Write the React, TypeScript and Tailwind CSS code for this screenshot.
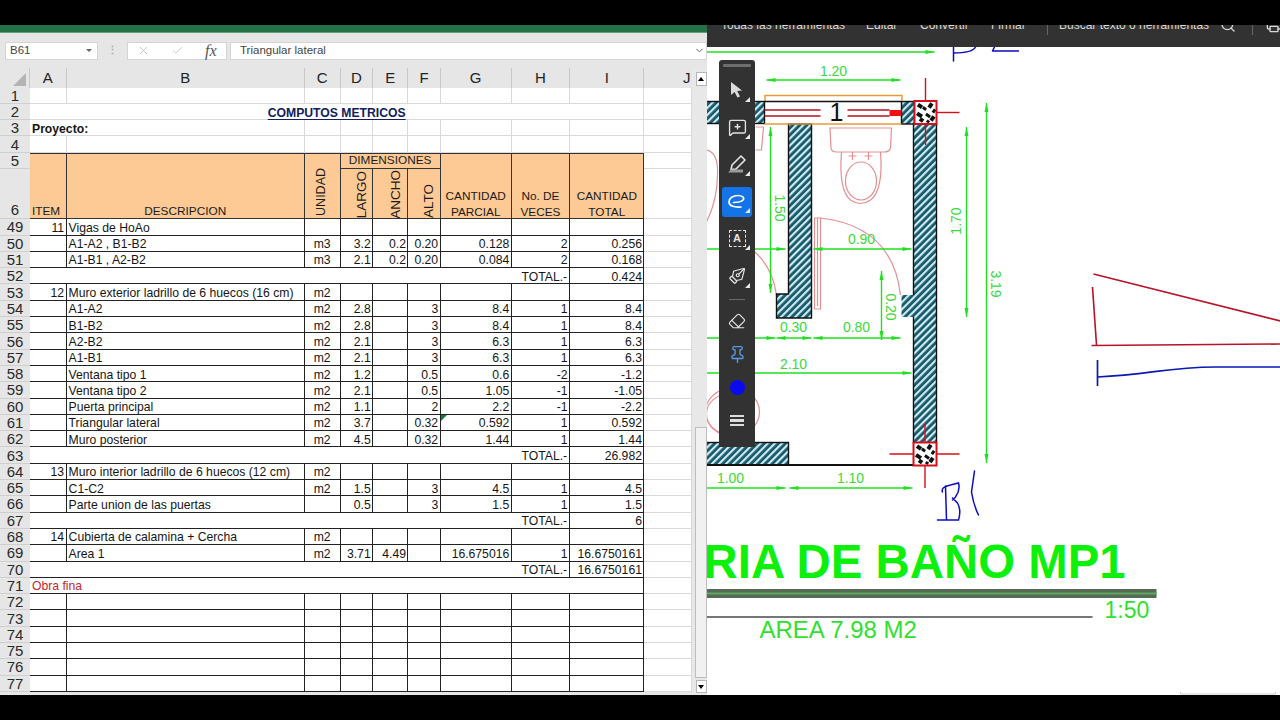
import React from 'react';
import { ChevronDown, Eraser, MessageSquarePlus, PenTool, Pin, Search, X, Check, Printer } from 'lucide-react';

type Row = { n: number; a?: string; b?: string; c?: string; d?: string; e?: string; f?: string; g?: string; h?: string; i?: string; total?: string; fina?: string };

const rows: Row[] = [
  { n: 49, a: '11', b: 'Vigas de HoAo' },
  { n: 50, b: 'A1-A2 , B1-B2', c: 'm3', d: '3.2', e: '0.2', f: '0.20', g: '0.128', h: '2', i: '0.256' },
  { n: 51, b: 'A1-B1 , A2-B2', c: 'm3', d: '2.1', e: '0.2', f: '0.20', g: '0.084', h: '2', i: '0.168' },
  { n: 52, total: '0.424' },
  { n: 53, a: '12', b: 'Muro exterior ladrillo de 6 huecos (16 cm)', c: 'm2' },
  { n: 54, b: 'A1-A2', c: 'm2', d: '2.8', f: '3', g: '8.4', h: '1', i: '8.4' },
  { n: 55, b: 'B1-B2', c: 'm2', d: '2.8', f: '3', g: '8.4', h: '1', i: '8.4' },
  { n: 56, b: 'A2-B2', c: 'm2', d: '2.1', f: '3', g: '6.3', h: '1', i: '6.3' },
  { n: 57, b: 'A1-B1', c: 'm2', d: '2.1', f: '3', g: '6.3', h: '1', i: '6.3' },
  { n: 58, b: 'Ventana tipo 1', c: 'm2', d: '1.2', f: '0.5', g: '0.6', h: '-2', i: '-1.2' },
  { n: 59, b: 'Ventana tipo 2', c: 'm2', d: '2.1', f: '0.5', g: '1.05', h: '-1', i: '-1.05' },
  { n: 60, b: 'Puerta principal', c: 'm2', d: '1.1', f: '2', g: '2.2', h: '-1', i: '-2.2' },
  { n: 61, b: 'Triangular lateral', c: 'm2', d: '3.7', f: '0.32', g: '0.592', h: '1', i: '0.592' },
  { n: 62, b: 'Muro posterior', c: 'm2', d: '4.5', f: '0.32', g: '1.44', h: '1', i: '1.44' },
  { n: 63, total: '26.982' },
  { n: 64, a: '13', b: 'Muro interior ladrillo de 6 huecos (12 cm)', c: 'm2' },
  { n: 65, b: 'C1-C2', c: 'm2', d: '1.5', f: '3', g: '4.5', h: '1', i: '4.5' },
  { n: 66, b: 'Parte union de las puertas', d: '0.5', f: '3', g: '1.5', h: '1', i: '1.5' },
  { n: 67, total: '6' },
  { n: 68, a: '14', b: 'Cubierta de calamina + Cercha', c: 'm2' },
  { n: 69, b: 'Area 1', c: 'm2', d: '3.71', e: '4.49', g: '16.675016', h: '1', i: '16.6750161' },
  { n: 70, total: '16.6750161' },
  { n: 71, fina: 'Obra fina' },
  { n: 72 }, { n: 73 }, { n: 74 }, { n: 75 }, { n: 76 }, { n: 77 },
];

const headCell = 'flex items-center justify-center bg-[#e6e6e6] border-r border-[#c8c8c8] text-[#222]';
const rowHead = 'flex items-center justify-center bg-[#e6e6e6] border-b border-[#cfcfcf] text-[15px] leading-none text-[#2a2a2a]';
const light = 'bg-white border-r border-b border-[#d9d9d9]';
const dark = 'bg-white border-r border-b border-[#222] flex items-center pt-[2px] whitespace-nowrap overflow-hidden';
const orange = 'bg-[#fdca96] border-r border-b border-[#333] border-t text-[11.8px] text-[#1a1a1a]';

const Num = ({ v, extra = '' }: { v?: string; extra?: string }) => (
  <div className={`${dark} justify-end pr-[1.5px] ${extra}`}>{v}</div>
);

const SheetRow = ({ r }: { r: Row }) => (
  <>
    <div className={rowHead}>{r.n}</div>
    {r.total !== undefined ? (
      <>
        <div className={`${dark} col-span-8 justify-end pr-[2px]`}>TOTAL.-</div>
        <Num v={r.total} />
      </>
    ) : r.fina ? (
      <div className={`${dark} col-span-9 pl-[2px] text-[#c4262e]`}>{r.fina}</div>
    ) : (
      <>
        <Num v={r.a} />
        <div className={`${dark} pl-[2px]`}>{r.b}</div>
        <div className={`${dark} justify-center`}>{r.c}</div>
        <Num v={r.d} />
        <Num v={r.e} />
        <Num v={r.f} />
        <div className={`${dark} justify-end pr-[1.5px] relative`}>
          {r.n === 61 && <span className="absolute left-0 top-0 w-0 h-0 border-t-[6px] border-t-[#1e7a3c] border-r-[6px] border-r-transparent" />}
          {r.g}
        </div>
        <Num v={r.h} />
        <Num v={r.i} />
      </>
    )}
    <div className={light} />
  </>
);

const Sheet = () => (
  <div className="grid w-[691.6px] text-[12.2px] leading-none text-[#151515] grid-cols-[30px_36.6px_238.2px_35.8px_32.6px_35.3px_32.2px_71.1px_58.4px_74.3px_47.1px] grid-rows-[19.6px_repeat(4,16.3px)_16px_50.5px_repeat(29,16.31px)]">
    {/* column letters */}
    <div className={`${headCell} relative`}>
      <span className="absolute right-[3px] bottom-[2px] w-0 h-0 border-b-[13px] border-b-[#b4b4b4] border-l-[13px] border-l-transparent" />
    </div>
    {['A', 'B', 'C', 'D', 'E', 'F', 'G', 'H', 'I'].map((c) => (
      <div key={c} className={`${headCell} text-[15px]`}>{c}</div>
    ))}
    <div className="flex items-center justify-end pr-[1px] bg-[#e6e6e6] text-[15px] text-[#222]">J</div>

    {/* rows 1 to 4 */}
    <div className={rowHead}>1</div>
    {Array.from({ length: 10 }).map((_, i) => <div key={i} className={light} />)}
    <div className={rowHead}>2</div>
    <div className={`${light} col-span-9 flex items-center justify-center pt-[3px] font-bold text-[#10205c]`}>
      <span className="underline underline-offset-[2px]">COMPUTOS METRICOS</span>
    </div>
    <div className={light} />
    <div className={rowHead}>3</div>
    <div className={`${light} col-span-2 flex items-center pt-[2px] pl-[2px] font-bold`}>Proyecto:</div>
    {Array.from({ length: 8 }).map((_, i) => <div key={i} className={light} />)}
    <div className={rowHead}>4</div>
    {Array.from({ length: 10 }).map((_, i) => <div key={i} className={light} />)}

    {/* header rows 5 and 6 */}
    <div className={rowHead}>5</div>
    <div className={`${orange} row-span-2 flex items-end pl-[2px]`}>ITEM</div>
    <div className={`${orange} row-span-2 flex items-end justify-center`}>DESCRIPCION</div>
    <div className={`${orange} row-span-2 flex items-end justify-center pb-[2px]`}>
      <span className="[writing-mode:vertical-rl] rotate-180 text-[12.5px] mr-[1px]">UNIDAD</span>
    </div>
    <div className={`${orange} col-span-3 flex items-center justify-center`}>DIMENSIONES</div>
    <div className={`${orange} row-span-2 flex flex-col items-center justify-end gap-[6px] pb-[1px] leading-[10px]`}><span>CANTIDAD</span><span>PARCIAL</span></div>
    <div className={`${orange} row-span-2 flex flex-col items-center justify-end gap-[6px] pb-[1px] leading-[10px]`}><span>No. DE</span><span>VECES</span></div>
    <div className={`${orange} row-span-2 flex flex-col items-center justify-end gap-[6px] pb-[1px] leading-[10px]`}><span>CANTIDAD</span><span>TOTAL</span></div>
    <div className={light} />
    <div className={`${rowHead} items-end pb-[1px]`}>6</div>
    {['LARGO', 'ANCHO', 'ALTO'].map((t) => (
      <div key={t} className="bg-[#fdca96] border-r border-b border-[#333] flex items-end justify-center text-[#1a1a1a]">
        <span className="[writing-mode:vertical-rl] rotate-180 text-[13.5px] ml-[10px]">{t}</span>
      </div>
    ))}
    <div className={light} />

    {rows.map((r) => <SheetRow key={r.n} r={r} />)}
  </div>
);

const ScrollBar = () => (
  <div className="flex-1 flex flex-col items-end bg-[#e8e8e8]">
    <div className="mt-[4px] w-[11px] h-[14px] bg-white border border-[#b5b5b5] flex items-center justify-center">
      <span className="w-0 h-0 border-x-[3px] border-x-transparent border-b-[4px] border-b-black" />
    </div>
    <div className="h-[341px]" />
    <div className="w-[12px] h-[251px] bg-[#f1f1f1] border border-[#bdbdbd]" />
    <div className="mt-[2px] w-[11px] h-[13px] bg-white border border-[#b5b5b5] flex items-center justify-center">
      <span className="w-0 h-0 border-x-[3px] border-x-transparent border-t-[4px] border-t-black" />
    </div>
  </div>
);

const FormulaBar = () => (
  <div className="h-[35px] bg-[#e6e6e6] pt-[8.5px] pl-[5px] flex items-start text-[11.5px] text-[#444]">
    <div className="w-[93px] h-[18px] bg-white border border-[#d4d4d4] flex items-center justify-between pl-[4px] pr-[5px]">
      <span>B61</span>
      <span className="w-0 h-0 border-x-[3px] border-x-transparent border-t-[3px] border-t-[#666]" />
    </div>
    <div className="w-[29px] h-[18px] flex items-center justify-center text-[#aaa] tracking-tighter font-bold text-[11px]">⋮</div>
    <div className="w-[100px] h-[18px] bg-white border border-[#d4d4d4] flex items-center gap-[21px] pl-[9px]">
      <X size={13} className="text-[#b9b9b9]" strokeWidth={1.5} />
      <Check size={13} className="text-[#c2c2c2]" strokeWidth={1.5} />
      <span className="font-['Liberation_Serif',serif] italic text-[16px] text-[#555] leading-none">fx</span>
    </div>
    <div className="ml-[3px] flex-1 h-[18px] bg-white border border-[#d4d4d4] flex items-center justify-between pl-[9px] pr-[1px]">
      <span>Triangular lateral</span>
      <ChevronDown size={11} className="text-[#555]" />
    </div>
  </div>
);

const TopBar = () => (
  <div className="h-[22px] bg-[#323232] overflow-hidden shrink-0">
    <div className="-mt-[10px] h-[20px] flex items-center text-[12px] text-[#d8d8d8] whitespace-nowrap pl-[14.5px]">
      <span className="w-[145px] shrink-0">Todas las herramientas</span>
      <span className="w-[54px] shrink-0">Editar</span>
      <span className="w-[71px] shrink-0">Convertir</span>
      <span className="w-[56px] shrink-0">Firmar</span>
      <span className="w-[12px] h-[20px] border-l border-[#666] shrink-0" />
      <span className="w-[161px] shrink-0">Buscar texto o herramientas</span>
      <Search size={16} className="text-[#d8d8d8] shrink-0" />
      <span className="ml-[16px] w-[14px] h-[20px] border-l border-[#666] shrink-0" />
      <Printer size={16} className="text-[#d8d8d8] shrink-0" />
    </div>
  </div>
);

const Corner = () => (
  <span className="absolute right-[5px] bottom-[7px] w-0 h-0 border-b-[5px] border-b-[#e8e8e8] border-l-[5px] border-l-transparent" />
);

const ToolBtn = ({ children, corner = true }: { children: React.ReactNode; corner?: boolean }) => (
  <div className="relative h-[37.2px] flex items-center justify-center">
    {children}
    {corner && <Corner />}
  </div>
);

const Toolbar = () => (
  <div className="absolute left-[12.5px] top-[34.5px] w-[36px] h-[387px] bg-[#323232] rounded-t-[3px] flex flex-col text-[#e4e4e4]">
    <div className="mx-[4px] mt-[4px] h-[3px] bg-[#6e6e6e] rounded-[1px] shrink-0" />
    <div className="h-[5px] shrink-0" />
    <ToolBtn>
      <svg width="16" height="18" viewBox="0 0 16 18"><path d="M2 1 L2 14 L5.6 11 L8.4 16.6 L11 15.4 L8.2 10 L13 9.6 Z" fill="#dcdcdc" /></svg>
    </ToolBtn>
    <ToolBtn>
      <MessageSquarePlus size={19} strokeWidth={1.7} />
    </ToolBtn>
    <ToolBtn>
      <svg width="20" height="20" viewBox="0 0 20 20" fill="none" stroke="#e4e4e4" strokeWidth="1.6">
        <path d="M14 2 L18 6 L9 15 L4 15.6 L5 11 Z" strokeLinejoin="round" />
        <path d="M1 18.5 L4 15.5 L16 15.5 L16 18.5 Z" fill="#9a9a9a" stroke="none" />
      </svg>
    </ToolBtn>
    <div className="relative h-[37.2px] flex items-center justify-center">
      <div className="w-[30px] h-[30px] bg-[#1473e6] rounded-[3px] flex items-center justify-center">
        <svg width="20" height="15" viewBox="0 0 20 15" fill="none" stroke="#fff" strokeWidth="1.7" strokeLinecap="round">
          <path d="M6.5 8.5 C10 8.5 14 8 16 6 C18 3.5 15 1.5 11 1.5 C6 1.5 2 4 2 8 C2 11.5 6 13.5 14 13" />
        </svg>
      </div>
      <Corner />
    </div>
    <ToolBtn>
      <div className="w-[17px] h-[17px] border-[1.5px] border-dashed border-[#e4e4e4] flex items-center justify-center text-[11px] font-bold leading-none">A</div>
    </ToolBtn>
    <ToolBtn>
      <PenTool size={18} strokeWidth={1.6} className="-scale-x-100" />
    </ToolBtn>
    <div className="h-[10px] flex items-center justify-center shrink-0">
      <div className="w-[16px] h-px bg-[#6a6a6a]" />
    </div>
    <div className="h-[33px] flex items-center justify-center shrink-0"><Eraser size={18} strokeWidth={1.6} /></div>
    <div className="h-[33px] flex items-center justify-center shrink-0"><Pin size={19} strokeWidth={1.7} className="text-[#5b9be6]" /></div>
    <div className="h-[33px] flex items-center justify-center shrink-0"><span className="w-[15px] h-[15px] rounded-full bg-[#0a0af0]" /></div>
    <div className="h-[34px] flex flex-col items-center justify-center gap-[2px] shrink-0">
      <span className="w-[14px] h-[2.5px] bg-[#dcdcdc]" />
      <span className="w-[14px] h-[2.5px] bg-[#dcdcdc]" />
      <span className="w-[14px] h-[2.5px] bg-[#dcdcdc]" />
    </div>
  </div>
);

const G = '#1fe01f';
const PINK = '#e58f92';
const RED = '#d3101a';

// dimension line with a small arrow head on each end
const Dim = ({ x1, y1, x2, y2, left = true, right = true }: { x1: number; y1: number; x2: number; y2: number; left?: boolean; right?: boolean }) => {
  const h = y1 === y2;
  return (
    <g fill={G}>
      <line x1={x1} y1={y1} x2={x2} y2={y2} stroke={G} strokeWidth="1.4" />
      {left && (h
        ? <polygon points={`${x1},${y1} ${x1 + 9},${y1 - 2} ${x1 + 9},${y1 + 2}`} />
        : <polygon points={`${x1},${y1} ${x1 - 2},${y1 + 9} ${x1 + 2},${y1 + 9}`} />)}
      {right && (h
        ? <polygon points={`${x2},${y2} ${x2 - 9},${y2 - 2} ${x2 - 9},${y2 + 2}`} />
        : <polygon points={`${x2},${y2} ${x2 - 2},${y2 - 9} ${x2 + 2},${y2 - 9}`} />)}
    </g>
  );
};

const Label = ({ x, y, t, rot }: { x: number; y: number; t: string; rot?: number }) => (
  <text x={x} y={y} fill="#3bd93b" fontSize="14" textAnchor="middle" dominantBaseline="middle" transform={rot ? `rotate(${rot} ${x} ${y})` : undefined}>{t}</text>
);

// column marker: red box with a scrambled fill and cross hairs
const Marker = ({ x, y, w, h, top, bottom, left, right }: { x: number; y: number; w: number; h: number; top: number; bottom: number; left: number; right: number }) => {
  const blobs = [[3, 3, 5, 4], [14, 2, 4, 5], [8, 6, 4, 3], [18, 8, 3, 4], [2, 12, 6, 4], [11, 13, 5, 3], [16, 15, 4, 5], [5, 17, 4, 4], [12, 19, 3, 3]];
  return (
    <g>
      <line x1={x + w / 2} y1={top} x2={x + w / 2} y2={bottom} stroke={RED} strokeWidth="1.4" />
      <line x1={left} y1={y + h / 2} x2={right} y2={y + h / 2} stroke={RED} strokeWidth="1.4" />
      <rect x={x} y={y} width={w} height={h} fill="#fff" />
      {blobs.map(([a, b, c, d], i) => <rect key={i} x={x + a} y={y + b} width={c} height={d} fill="#111" transform={`rotate(35 ${x + a + c / 2} ${y + b + d / 2})`} />)}
      <rect x={x} y={y} width={w} height={h} fill="none" stroke="#d4101a" strokeWidth="2" />
    </g>
  );
};

const Drawing = () => (
  <svg viewBox="706.5 47 573.5 648" className="block w-full flex-1 min-h-0 bg-white">
    <defs>
      <pattern id="hatch" width="5" height="5" patternUnits="userSpaceOnUse" patternTransform="rotate(45)">
        <rect width="5" height="5" fill="#14586a" />
        <rect width="2.2" height="5" fill="#cfeaf0" />
      </pattern>
    </defs>

    {/* sanitary fixtures */}
    <g fill="none" stroke={PINK} strokeWidth="1.2">
      <path d="M829.5 128 L891 128 L890 148 Q889 152 884 152 L836 152 Q831 152 830.5 148 Z" />
      <path d="M841 152 Q838 190 850 200 Q860 207 870 200 Q883 190 880 152" />
      <ellipse cx="860.5" cy="181" rx="15.5" ry="19" />
      <path d="M852 152 v8 M848 156 h8 M868 152 v8 M864 156 h8" />
      <path d="M755 127 L763 127 L761 150 L755 150" />
      <path d="M706 150 Q716 152 717 168 Q718 198 706 222" />
      <path d="M814 218 L814 309 L820 309 L820 218 Z M817 218 L817 306" />
      <path d="M820 218 Q892 226 900 295" />
      <path d="M752 250 Q772 266 776 295" />
      <ellipse cx="732" cy="412" rx="27" ry="24" />
      <ellipse cx="728" cy="414" rx="22" ry="20" />
    </g>

    {/* walls */}
    <g stroke="#111" strokeWidth="1.4">
      <rect x="700" y="101.5" width="64" height="22" fill="url(#hatch)" />
      <rect x="901" y="101.5" width="13" height="22.5" fill="url(#hatch)" />
      <path d="M788 124 L788 294 L776 294 L776 318 L811 318 L811 124 Z" fill="url(#hatch)" />
      <path d="M913 124 L913 295 L901 295 L901 317 L913 317 L913 443 L936 443 L936 124 Z" fill="url(#hatch)" stroke="none" />
      <path d="M913 124 L913 295 M913 317 L913 443 M936 124 L936 443" fill="none" />
      <rect x="700" y="442.5" width="88" height="22.5" fill="url(#hatch)" />
      <line x1="706" y1="465" x2="913" y2="465" strokeWidth="2" />
    </g>

    {/* window */}
    <path d="M764.5 101 L764.5 95.5 L901.5 95.5 L901.5 101 M764 124 L901 124" fill="none" stroke="#e89a35" strokeWidth="1.4" />
    <line x1="764" y1="101.5" x2="901" y2="101.5" stroke="#111" strokeWidth="1.4" />
    <g stroke="#b3141c" strokeWidth="1.6">
      <line x1="764" y1="110" x2="820" y2="110" />
      <line x1="764" y1="116" x2="820" y2="116" />
      <line x1="847" y1="110" x2="889" y2="110" />
      <line x1="847" y1="116" x2="889" y2="116" />
    </g>
    <rect x="889" y="110" width="12" height="6" fill="#f01010" />
    <text x="836" y="121" fontSize="25" textAnchor="middle" fill="#111">1</text>

    <Marker x={914} y={101} w={22} h={23} top={78} bottom={145} left={930} right={959} />
    <Marker x={913} y={442.5} w={23} h={23} top={423} bottom={488} left={889} right={959} />

    {/* dimensions */}
    <Dim x1={700} y1={52} x2={934} y2={52} left={false} />
    <Dim x1={766} y1={80} x2={900} y2={80} />
    <Label x={833} y={72} t="1.20" />
    <Dim x1={770} y1={127} x2={770} y2={293} />
    <Label x={778} y={208} t="1.50" rot={90} />
    <Dim x1={700} y1={249} x2={785} y2={249} left={false} />
    <Dim x1={813} y1={249} x2={911} y2={249} />
    <Label x={861} y={240} t="0.90" />
    <Dim x1={966} y1={127} x2={966} y2={317} />
    <Label x={957} y={221} t="1.70" rot={-90} />
    <Dim x1={986} y1={103} x2={986} y2={463} />
    <Label x={994} y={284} t="3.19" rot={90} />
    <Dim x1={881} y1={271} x2={881} y2={340} />
    <Label x={889} y={307} t="0.20" rot={90} />
    <Dim x1={700} y1={338} x2={775} y2={338} left={false} />
    <Dim x1={776} y1={338} x2={811} y2={338} />
    <Dim x1={813} y1={338} x2={900} y2={338} />
    <Label x={793} y={328} t="0.30" />
    <Label x={856} y={328} t="0.80" />
    <Dim x1={700} y1={373} x2={911} y2={373} left={false} />
    <Label x={793} y={365} t="2.10" />
    <Dim x1={700} y1={488} x2={785} y2={488} left={false} />
    <Dim x1={789} y1={488} x2={912} y2={488} />
    <Label x={730} y={479} t="1.00" />
    <Label x={850} y={479} t="1.10" />

    {/* hand notes */}
    <g fill="none" stroke="#0c0cc0" strokeWidth="1.5" strokeLinecap="round">
      <path d="M953 47 L953 61 M953 53 Q972 53 975 47 M992 51 L1018 51 M992 51 L994 47" />
      <path d="M942 492 Q940 487 950 485 L958 483 Q960 490 955 497 L952 500 M945 486 L946 520 M937 520 L958 520 Q961 510 957 503 L952 498 M974 471 Q972 485 971 492 Q973 505 978 515" />
    </g>
    <g fill="none" stroke="#b5142a" strokeWidth="1.6">
      <line x1="1093" y1="274" x2="1280" y2="321" />
      <line x1="1092" y1="287" x2="1096" y2="345" />
      <line x1="1091" y1="345.5" x2="1280" y2="344" />
    </g>
    <g fill="none" stroke="#0b18b5" strokeWidth="1.7">
      <line x1="1097" y1="360" x2="1097" y2="386" />
      <path d="M1097 377 C1150 375 1165 367 1215 367 L1280 367" />
    </g>

    {/* title block */}
    <text x="703" y="578" fontSize="47.4" fontWeight="700" fill="#0cf00c">RIA DE BAÑO MP1</text>
    <rect x="706" y="589" width="450" height="9" fill="#556b55" />
    <rect x="706" y="592.5" width="450" height="2" fill="#5fa85f" />
    <rect x="706" y="616" width="386" height="2" fill="#777" />
    <text x="1104" y="618" fontSize="23" fill="#2fe02f">1:50</text>
    <text x="759" y="638" fontSize="24" fill="#2fe02f">AREA 7.98 M2</text>
    <path d="M1180 692 L1180 694 L1275 694 L1275 692" fill="none" stroke="#ccc" strokeWidth="1" />
  </svg>
);

export default function App() {
  return (
    <div className="w-[1280px] h-[720px] bg-black overflow-hidden pt-[25px] font-['Liberation_Sans',Arial,sans-serif]">
      <div className="h-[670px] flex">
        <div className="w-[706.5px] flex flex-col shrink-0 bg-[#e6e6e6]">
          <div className="h-[8px] bg-[#217346] border-b border-[#5f9f7d]" />
          <FormulaBar />
          <div className="flex flex-1">
            <Sheet />
            <ScrollBar />
          </div>
        </div>
        <div className="relative w-[573.5px] min-w-0 flex flex-col">
          <TopBar />
          <Drawing />
          <Toolbar />
        </div>
      </div>
    </div>
  );
}
